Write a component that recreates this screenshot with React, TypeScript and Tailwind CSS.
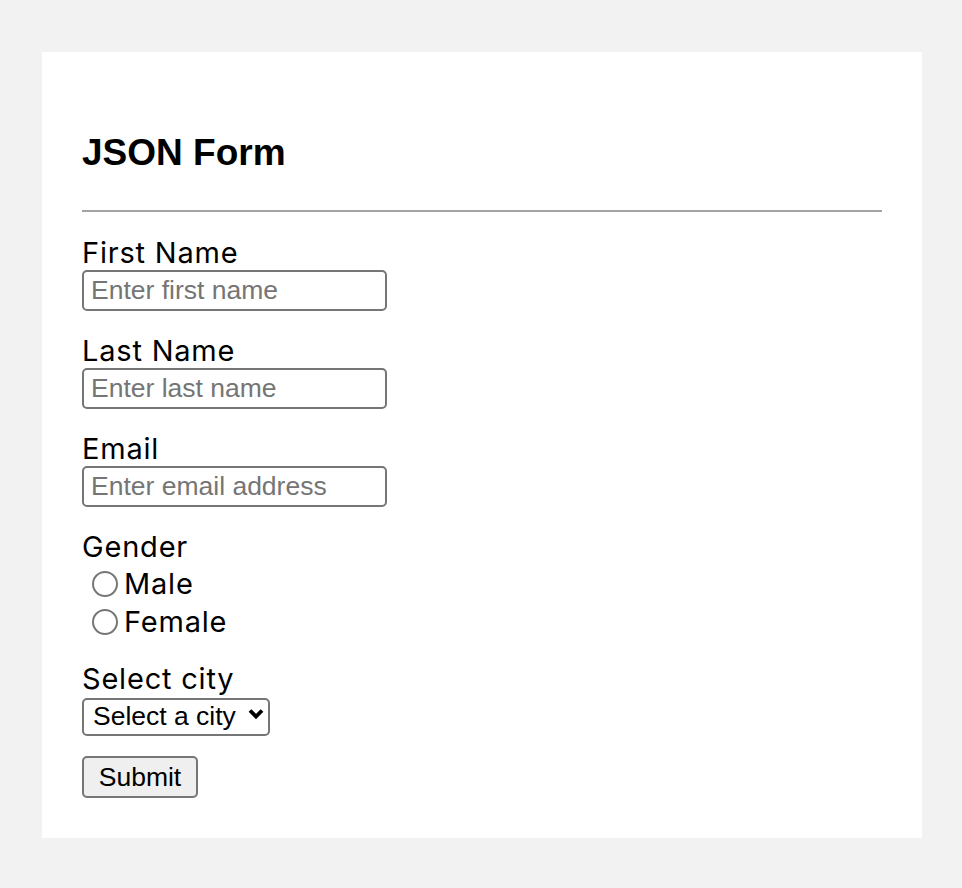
import { useState } from "react";

const fields = [
  { name: "firstName", label: "First Name", type: "text", placeholder: "Enter first name" },
  { name: "lastName", label: "Last Name", type: "text", placeholder: "Enter last name" },
  { name: "email", label: "Email", type: "email", placeholder: "Enter email address" },
];

const arial = "font-['Liberation_Sans',Arial,sans-serif]";
const inter = "font-['Inter','Noto_Sans',sans-serif]";

export default function App() {
  const [values, setValues] = useState<Record<string, string>>({});

  return (
    <div className="min-h-screen bg-[#f2f2f2] pt-[52px] pl-[42px] pr-[40px] pb-[50px]">
      <div className={`bg-white w-[880px] px-[40px] pt-[40px] pb-[40px] text-black ${inter}`}>
        <h2 className={`${arial} text-[37px] font-bold leading-[38px] mt-[42px]`}>JSON Form</h2>
        <hr className="mt-[38px] border-0 border-t-2 border-[#a3a3a3]" />

        <form onSubmit={(e) => e.preventDefault()} className="mt-[24px]">
          {fields.map((f) => (
            <div key={f.name} className="mb-[23px]">
              <label className="block text-[29px] tracking-[0.8px] leading-[34px]">{f.label}</label>
              <input
                type={f.type}
                placeholder={f.placeholder}
                value={values[f.name] || ""}
                onChange={(e) => setValues({ ...values, [f.name]: e.target.value })}
                className={`${arial} block w-[305px] h-[41px] border-2 border-[#767676] rounded-[5px] px-[7px] text-[26.5px] placeholder:text-[#757575] outline-none`}
              />
            </div>
          ))}

          <div className="mb-[21px]">
            <label className="block text-[29px] tracking-[0.8px] leading-[34px]">Gender</label>
            <div className="mt-[1px]">
              {["Male", "Female"].map((g) => (
                <label key={g} className="flex items-center h-[38px] text-[29px] tracking-[0.8px]">
                  <input
                    type="radio"
                    name="gender"
                    value={g.toLowerCase()}
                    className="appearance-none w-[26px] h-[26px] rounded-full border-2 border-[#767676] ml-[10px] mr-[6px] shrink-0 checked:border-[7px] checked:border-blue-600"
                  />
                  {g}
                </label>
              ))}
            </div>
          </div>

          <div className="mb-[20px]">
            <label className="block text-[29px] tracking-[0.8px] leading-[34px]">Select city</label>
            <div className="relative w-[188px] mt-[2px]">
              <select
                defaultValue=""
                className={`${arial} appearance-none block w-[188px] h-[38px] border-2 border-[#767676] rounded-[5px] pl-[9px] pr-[30px] pt-0 pb-[1px] text-[26.5px] leading-[29px] bg-white text-black outline-none`}
              >
                <option value="">Select a city</option>
                <option value="ny">New York</option>
                <option value="la">Los Angeles</option>
                <option value="ch">Chicago</option>
              </select>
              <svg
                className="absolute right-[6px] top-[10px] pointer-events-none"
                width="16"
                height="12"
                viewBox="0 0 16 12"
              >
                <path d="M2 2.5 L8 8.5 L14 2.5" stroke="black" strokeWidth="3.8" fill="none" />
              </svg>
            </div>
          </div>

          <button
            type="submit"
            className={`${arial} block w-[116px] h-[42px] border-2 border-[#767676] rounded-[5px] bg-[#efefef] text-[26.5px]`}
          >
            Submit
          </button>
        </form>
      </div>
    </div>
  );
}
